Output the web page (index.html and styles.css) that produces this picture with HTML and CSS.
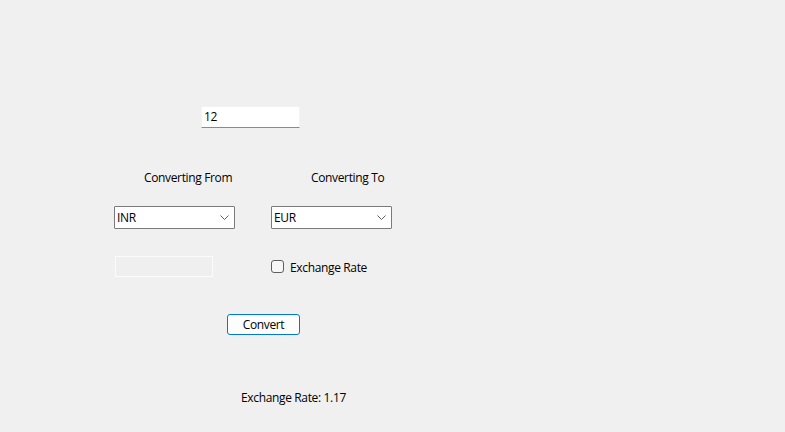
FILE: index.html
```html
<!DOCTYPE html>
<html>
<head>
<meta charset="utf-8">
<link rel="stylesheet" href="styles.css">
</head>
<body>
<div class="form">
  <div class="row row-amount">
    <div class="textbox">12</div>
  </div>
  <div class="row row-labels">
    <div class="label label-from">Converting From</div>
    <div class="label">Converting To</div>
  </div>
  <div class="row row-combos">
    <div class="combo"><span>INR</span><svg class="chev" width="9" height="6" viewBox="0 0 9 6"><path d="M0.5 0.5 L4.5 4.5 L8.5 0.5" fill="none" stroke="#606060" stroke-width="1"/></svg></div>
    <div class="combo"><span>EUR</span><svg class="chev" width="9" height="6" viewBox="0 0 9 6"><path d="M0.5 0.5 L4.5 4.5 L8.5 0.5" fill="none" stroke="#606060" stroke-width="1"/></svg></div>
  </div>
  <div class="row row-rate">
    <div class="disabled-box"></div>
    <label class="check"><span class="box"></span><span class="check-text">Exchange Rate</span></label>
  </div>
  <div class="row row-button">
    <button class="btn">Convert</button>
  </div>
  <div class="row row-result">
    <div class="label">Exchange Rate: 1.17</div>
  </div>
</div>
</body>
</html>
```
FILE: styles.css
```css
html, body {
  margin: 0;
  padding: 0;
  background: #f0f0f0;
}
body {
  width: 785px;
  height: 432px;
  overflow: hidden;
  font-family: "Open Sans", "Noto Sans", sans-serif;
  font-size: 12px;
  letter-spacing: -0.35px;
  color: #000;
}
.form {
  display: flex;
  flex-direction: column;
}
.row {
  display: flex;
  align-items: center;
}
.row-amount {
  margin-top: 106px;
  padding-left: 201px;
}
.textbox {
  box-sizing: border-box;
  width: 99px;
  height: 22px;
  background: #fff;
  border: 1px solid #f3f3f3;
  border-bottom: 1px solid #8a8a8a;
  padding-left: 2px;
  line-height: 20px;
}
.row-labels {
  margin-top: 42px;
  padding-left: 144px;
  height: 16px;
}
.label {
  line-height: 16px;
  white-space: nowrap;
}
.label-from {
  width: 167px;
}
.row-combos {
  margin-top: 20px;
  padding-left: 114px;
  gap: 36px;
}
.combo {
  box-sizing: border-box;
  width: 121px;
  height: 23px;
  background: #fff;
  border: 1px solid #7a7a7a;
  border-radius: 1px;
  display: flex;
  align-items: center;
  justify-content: space-between;
  padding: 0 5px 0 2px;
}
.chev {
  display: block;
  margin-top: 1px;
}
.row-rate {
  margin-top: 27px;
  padding-left: 115px;
  height: 21px;
  gap: 58px;
}
.disabled-box {
  box-sizing: border-box;
  width: 98px;
  height: 21px;
  background: #efefef;
  border: 1px solid #fbfbfb;
}
.check {
  display: flex;
  align-items: center;
  gap: 6px;
}
.check .box {
  box-sizing: border-box;
  width: 13px;
  height: 13px;
  border: 1px solid #5f5f5f;
  border-radius: 3px;
  background: #f7f7f7;
}
.check-text {
  position: relative;
  top: 1px;
}
.row-button {
  margin-top: 37px;
  padding-left: 227px;
}
.btn {
  box-sizing: border-box;
  width: 73px;
  height: 21px;
  background: #fdfdfd;
  border: 1px solid #0078d4;
  border-radius: 3px;
  font-family: inherit;
  font-size: 12px;
  letter-spacing: -0.35px;
  color: #000;
  padding: 0;
  line-height: 19px;
}
.row-result {
  margin-top: 55px;
  padding-left: 241px;
}
```
